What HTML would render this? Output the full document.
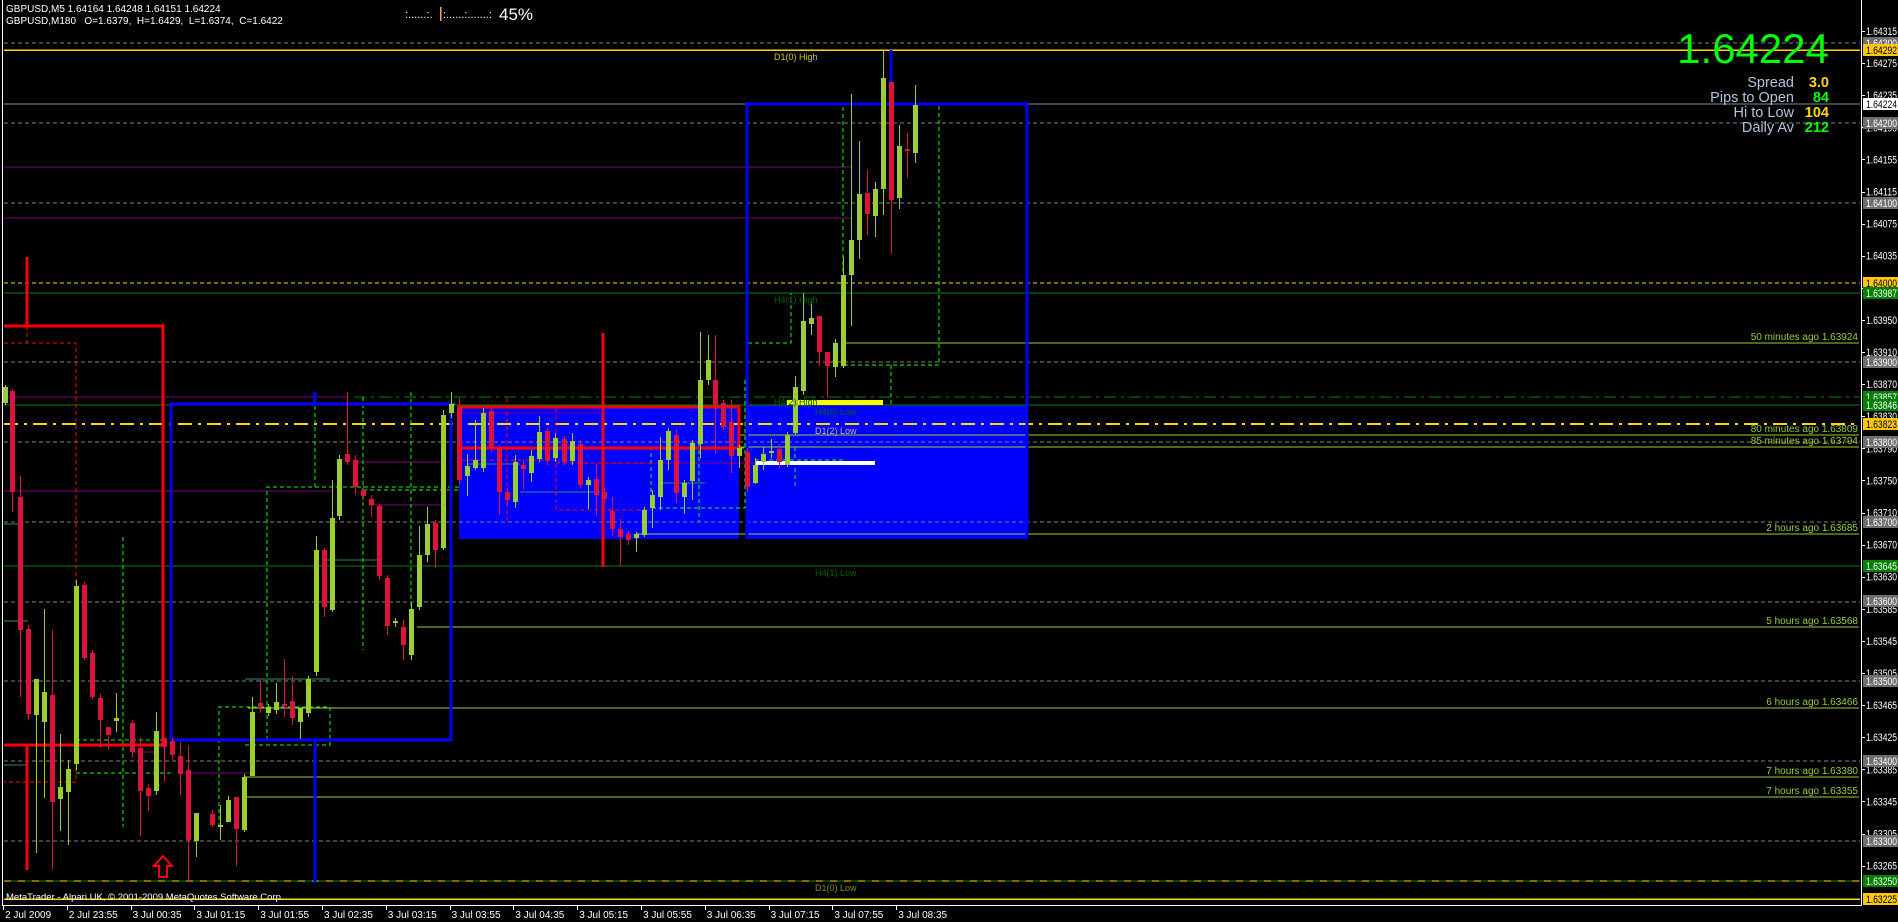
<!DOCTYPE html>
<html><head><meta charset="utf-8"><style>
html,body{margin:0;padding:0;background:#000;width:1898px;height:922px;overflow:hidden}
svg{display:block}
text{font-family:"Liberation Sans",sans-serif}
</style></head><body>
<svg id="s" width="1898" height="922" viewBox="0 0 1898 922" xmlns="http://www.w3.org/2000/svg">
<rect width="1898" height="922" fill="#000"/>
<g id="lines" shape-rendering="crispEdges">
<rect x="459" y="405" width="280" height="134" fill="#0000ff"/>
<rect x="747" y="405" width="279" height="134" fill="#0000ff"/>
<g stroke="#808080" stroke-width="1" stroke-dasharray="4,3">
<line x1="4" y1="43" x2="1860" y2="43"/><line x1="4" y1="123" x2="1860" y2="123"/>
<line x1="4" y1="203" x2="1860" y2="203"/><line x1="4" y1="362" x2="1860" y2="362"/>
<line x1="4" y1="442" x2="1860" y2="442"/><line x1="4" y1="522" x2="1860" y2="522"/>
<line x1="4" y1="602" x2="1860" y2="602"/><line x1="4" y1="681" x2="1860" y2="681"/>
<line x1="4" y1="761" x2="1860" y2="761"/><line x1="4" y1="841" x2="1860" y2="841"/>
</g>
<line x1="4" y1="50" x2="1860" y2="50" stroke="#ffd700" stroke-width="1.5"/>
<line x1="4" y1="104" x2="1860" y2="104" stroke="#778899"/>
<line x1="4" y1="167" x2="851" y2="167" stroke="#800080"/>
<line x1="4" y1="218" x2="851" y2="218" stroke="#800080"/>
<line x1="4" y1="283" x2="1860" y2="283" stroke="#ffd700" stroke-dasharray="4,3"/>
<line x1="4" y1="293" x2="1860" y2="293" stroke="#008000"/>
<line x1="843" y1="343" x2="1859" y2="343" stroke="#9acd32"/>
<line x1="4" y1="397" x2="1860" y2="397" stroke="#008000" stroke-dasharray="12,5,3,5"/>
<line x1="4" y1="405" x2="1860" y2="405" stroke="#008000"/>
<line x1="4" y1="424" x2="1860" y2="424" stroke="#ffd700" stroke-width="2" stroke-dasharray="14,6,3,6"/>
<line x1="740" y1="435" x2="1859" y2="435" stroke="#9acd32"/>
<line x1="740" y1="447" x2="1859" y2="447" stroke="#9acd32"/>
<line x1="637" y1="534" x2="1859" y2="534" stroke="#9acd32"/>
<line x1="4" y1="566" x2="1860" y2="566" stroke="#008000"/>
<line x1="417" y1="627" x2="1859" y2="627" stroke="#9acd32"/>
<line x1="248" y1="708" x2="1859" y2="708" stroke="#9acd32"/>
<line x1="245" y1="777" x2="1859" y2="777" stroke="#9acd32"/>
<line x1="245" y1="797" x2="1859" y2="797" stroke="#9acd32"/>
<line x1="4" y1="881" x2="1860" y2="881" stroke="#008000"/>
<line x1="4" y1="881" x2="1860" y2="881" stroke="#ffd700" stroke-dasharray="7,7"/>
<line x1="4" y1="899" x2="1860" y2="899" stroke="#ffd700" stroke-width="1.5"/>
<g stroke="#800080"><line x1="4" y1="397" x2="347" y2="397"/><line x1="4" y1="491" x2="331" y2="491"/><line x1="355" y1="462" x2="443" y2="462"/><line x1="371" y1="505" x2="443" y2="505"/><line x1="459" y1="413" x2="600" y2="413"/><line x1="600" y1="463" x2="763" y2="463"/><line x1="132" y1="752" x2="155" y2="752"/><line x1="180" y1="773" x2="250" y2="773"/></g>
<g stroke="#2e8b57"><line x1="4" y1="524" x2="20" y2="524"/><line x1="4" y1="621" x2="28" y2="621"/><line x1="4" y1="765" x2="28" y2="765"/><line x1="323" y1="560" x2="379" y2="560"/><line x1="467" y1="464" x2="520" y2="464"/><line x1="520" y1="492" x2="600" y2="492"/><line x1="660" y1="483" x2="705" y2="483"/><line x1="245" y1="679" x2="330" y2="679"/></g>
<g stroke="#00ff00" stroke-dasharray="4,3" fill="none">
<line x1="123" y1="537" x2="123" y2="827"/>
<polyline points="76,740 163,740"/><polyline points="76,773 171,773"/>
<polyline points="267,740 267,487 460,487"/>
<line x1="315" y1="392" x2="315" y2="487"/>
<line x1="363" y1="397" x2="363" y2="650"/>
<line x1="411" y1="392" x2="411" y2="650"/>
<line x1="340" y1="404" x2="455" y2="404"/>
<line x1="363" y1="490" x2="460" y2="490"/>
<polyline points="219,827 219,707 330,707 330,745 245,745"/>
<polyline points="843,104 939,104 939,365 843,365 843,104"/>
<polyline points="748,343 791,343 791,293"/>
<line x1="891" y1="50" x2="891" y2="104"/>
<line x1="891" y1="365" x2="891" y2="405"/>
<line x1="699" y1="380" x2="699" y2="522"/>
<polyline points="745,380 745,508 651,508 651,448 745,448"/>
<line x1="795" y1="447" x2="795" y2="488"/>
<line x1="755" y1="460" x2="843" y2="460"/>
</g>
<g stroke="#ff0000" stroke-dasharray="4,3" fill="none">
<polyline points="4,343 76,343 76,782 4,782"/>
<line x1="27" y1="326" x2="27" y2="343"/>
<polyline points="556,408 556,510 651,510"/>
<line x1="556" y1="463" x2="651" y2="463"/>
<line x1="462" y1="460" x2="555" y2="460"/>
<line x1="507" y1="398" x2="507" y2="522"/>
<line x1="604" y1="432" x2="604" y2="460"/>
</g>
<g stroke="#ff0000" stroke-width="3" fill="none">
<polyline points="4,326 163,326 163,745 4,745"/>
<line x1="27" y1="257" x2="27" y2="326"/>
<line x1="27" y1="745" x2="27" y2="870"/>
<rect x="459" y="407" width="280" height="41"/>
<line x1="459" y1="448" x2="459" y2="480"/>
<line x1="603" y1="333" x2="603" y2="567"/>
</g>
<g stroke="#0000ff" stroke-width="3" fill="none">
<polyline points="171,740 171,404 451,404 451,740 171,740"/>
<line x1="315" y1="740" x2="315" y2="883"/>
<line x1="315" y1="392" x2="315" y2="404"/>
<polyline points="747,539 747,104 1027,104 1027,539"/>
<line x1="891" y1="50" x2="891" y2="104"/>
</g>
<rect x="787" y="400" width="96" height="5" fill="#ffff00"/>
<rect x="756" y="461" width="119" height="4" fill="#ffffff"/>
</g>
<g id="candles" shape-rendering="crispEdges"></g>
<path d="M163,856 L172,866 L167,866 L167,877 L159,877 L159,866 L154,866 Z" fill="none" stroke="#ff0000" stroke-width="2"/>
<g font-size="9">
<text x="774" y="60" fill="#c8c820">D1(0) High</text>
<text x="774" y="303" fill="#006400">H4(1) High</text>
<text x="774" y="405" fill="#006400">H4(2) High</text>
<text x="815" y="415" fill="#006400">H4(0) Low</text>
<text x="815" y="434" fill="#d2b48c">D1(2) Low</text>
<text x="815" y="576" fill="#006400">H4(1) Low</text>
<text x="815" y="891" fill="#7c9a1a">D1(0) Low</text>
</g>
<g font-size="10" fill="#9acd32" text-anchor="end">
<text x="1858" y="340">50 minutes ago 1.63924</text>
<text x="1858" y="432">80 minutes ago 1.63809</text>
<text x="1858" y="444">85 minutes ago 1.63794</text>
<text x="1858" y="531">2 hours ago 1.63685</text>
<text x="1858" y="624">5 hours ago 1.63568</text>
<text x="1858" y="705">6 hours ago 1.63466</text>
<text x="1858" y="774">7 hours ago 1.63380</text>
<text x="1858" y="794">7 hours ago 1.63355</text>
</g>
<g fill="#fff" font-size="10">
<text x="6" y="12">GBPUSD,M5  1.64164 1.64248 1.64151 1.64224</text>
<text x="6" y="24" xml:space="preserve">GBPUSD,M180   O=1.6379,  H=1.6429,  L=1.6374,  C=1.6422</text>
<text x="405" y="18" font-size="11">:......:.</text>
<rect x="440" y="7" width="1.5" height="14" fill="#f4a460"/>
<text x="443" y="18" font-size="11">:......:.......:</text>
<text x="499" y="20" font-size="17">45%</text>
<text x="6" y="900" font-size="9.5">MetaTrader - Alpari UK, © 2001-2009 MetaQuotes Software Corp.</text>
</g>
<text x="1829" y="63" font-size="42" fill="#00ff00" text-anchor="end">1.64224</text>
<g font-size="14.5" fill="#b0c4de" text-anchor="end">
<text x="1794" y="87">Spread</text><text x="1794" y="102">Pips to Open</text>
<text x="1794" y="117">Hi to Low</text><text x="1794" y="132">Daily Av</text>
</g>
<g font-size="14.5" font-weight="bold" text-anchor="end">
<text x="1829" y="87" fill="#ffd700">3.0</text><text x="1829" y="102" fill="#00ff00">84</text>
<text x="1829" y="117" fill="#ffd700">104</text><text x="1829" y="132" fill="#00ff00">212</text>
</g>
<g shape-rendering="crispEdges">
<line x1="2.5" y1="0" x2="2.5" y2="905" stroke="#fff"/>
<line x1="1861.5" y1="0" x2="1861.5" y2="905" stroke="#fff"/>
<line x1="2" y1="905.5" x2="1862" y2="905.5" stroke="#fff"/>
</g>
<g id="axis" font-size="11" fill="#fff"></g>
<g id="tags" font-size="11"></g>
<g id="time" font-size="10" fill="#fff"></g>
</svg>
<script>
var NS="http://www.w3.org/2000/svg";
function el(p,t,a,txt){var e=document.createElementNS(NS,t);for(var k in a)e.setAttribute(k,a[k]);if(txt!=null)e.textContent=txt;p.appendChild(e);return e;}
var C=[[5,387,403,385,405,'g'],[12,391,492,389,512,'r'],[20,497,630,476,697,'r'],[28,629,714,625,720,'r'],[36,679,715,679,853,'g'],[44,692,722,609,798,'g'],[52,695,802,630,870,'r'],[60,787,799,734,831,'g'],[68,769,792,760,845,'g'],[76,586,764,580,770,'g'],[84,585,658,582,660,'r'],[92,653,697,650,700,'r'],[100,698,720,694,748,'r'],[108,727,735,727,749,'r'],[116,718,721,693,732,'g'],[132,723,752,720,758,'r'],[140,748,791,738,836,'r'],[148,788,796,784,811,'r'],[156,731,791,712,795,'g'],[164,738,747,738,782,'r'],[172,741,755,738,760,'r'],[180,756,774,742,795,'r'],[188,770,840,745,882,'r'],[196,813,841,813,857,'g'],[212,814,825,810,827,'r'],[220,825,827,805,840,'g'],[228,800,822,796,822,'g'],[236,797,829,797,866,'r'],[244,777,830,774,832,'g'],[252,712,776,697,776,'g'],[260,703,707,680,713,'r'],[268,707,713,704,716,'g'],[276,702,710,683,714,'g'],[284,704,706,659,717,'r'],[292,701,718,676,725,'r'],[300,708,722,708,739,'g'],[308,679,713,676,717,'g'],[316,550,672,536,676,'g'],[324,550,607,548,617,'r'],[332,518,610,480,612,'g'],[339,459,516,455,520,'g'],[347,454,462,392,465,'r'],[355,460,487,455,495,'r'],[363,490,496,485,500,'r'],[371,499,505,495,517,'r'],[379,506,576,504,580,'r'],[387,578,626,575,635,'r'],[395,621,623,618,627,'g'],[403,627,645,620,660,'r'],[411,609,655,603,660,'g'],[419,555,607,526,610,'g'],[427,524,555,507,562,'g'],[435,523,550,520,568,'r'],[443,415,548,410,550,'g'],[451,404,413,392,418,'g'],[459,407,480,398,485,'r'],[467,466,476,454,496,'g'],[475,460,468,420,470,'g'],[483,413,468,408,472,'g'],[491,411,448,408,452,'r'],[499,448,492,445,515,'r'],[507,492,500,488,505,'r'],[515,462,502,455,508,'g'],[523,465,469,460,490,'r'],[531,456,473,450,482,'g'],[539,432,459,416,462,'g'],[547,431,461,428,465,'r'],[555,438,458,433,462,'g'],[564,439,462,436,465,'r'],[572,441,461,433,465,'g'],[580,444,485,440,488,'r'],[588,480,485,477,509,'g'],[596,479,495,463,516,'r'],[604,492,499,488,503,'r'],[612,511,529,497,536,'r'],[620,529,537,519,566,'r'],[628,534,540,531,545,'r'],[636,534,538,532,552,'g'],[644,510,535,507,537,'g'],[652,495,508,490,528,'g'],[660,460,497,437,510,'g'],[668,431,460,428,470,'g'],[676,435,493,429,503,'r'],[684,483,497,480,514,'g'],[692,443,481,440,500,'g'],[700,380,444,332,458,'g'],[708,360,380,335,385,'g'],[715,380,405,335,454,'r'],[723,403,427,400,430,'r'],[731,422,456,400,473,'r'],[739,448,456,445,468,'g'],[747,452,487,448,492,'r'],[755,465,483,458,484,'g'],[763,454,462,447,470,'g'],[771,451,453,439,458,'g'],[779,449,462,444,468,'r'],[787,435,465,432,467,'g'],[795,387,433,376,435,'g'],[803,321,391,293,395,'g'],[811,318,324,300,335,'g'],[819,316,352,316,366,'r'],[827,352,366,352,398,'r'],[835,343,367,339,377,'g'],[843,275,366,257,368,'g'],[851,240,275,94,326,'g'],[859,194,240,141,259,'g'],[867,193,214,169,235,'r'],[875,189,216,182,237,'g'],[883,78,189,50,215,'g'],[891,82,200,82,254,'r'],[899,146,198,125,209,'g'],[907,149,151,133,178,'r'],[915,105,153,85,163,'g']];
var g=document.getElementById('candles');
C.forEach(function(c){var col=c[5]=='g'?'#9acd32':'#dc143c';
el(g,'rect',{x:c[0],y:c[3],width:1,height:c[4]-c[3],fill:col});
el(g,'rect',{x:c[0]-2,y:c[1],width:5,height:Math.max(2,c[2]-c[1]),fill:col});});
var ax=document.getElementById('axis');
var P=["1.64315","1.64275","1.64235","1.64195","1.64155","1.64115","1.64075","1.64035","1.63990","1.63950","1.63910","1.63870","1.63830","1.63790","1.63750","1.63710","1.63670","1.63630","1.63585","1.63545","1.63505","1.63465","1.63425","1.63385","1.63345","1.63305","1.63265"];
P.forEach(function(p,i){var y=31+i*32.1;el(ax,'rect',{x:1862,y:Math.round(y),width:3,height:1,fill:'#fff'});el(ax,'text',{x:1866,y:y+4,textLength:31,lengthAdjust:'spacingAndGlyphs'},p);});
var T=[[43,'#6e6e6e','1.64300','#fff'],[50,'#ffc800','1.64292','#000'],[104,'#ffffff','1.64224','#000'],[123,'#6e6e6e','1.64200','#fff'],[203,'#6e6e6e','1.64100','#fff'],[283,'#ffc800','1.64000','#000'],[293,'#008000','1.63987','#fff'],[362,'#6e6e6e','1.63900','#fff'],[397,'#008000','1.63857','#fff'],[405,'#008000','1.63846','#fff'],[424,'#ffc800','1.63823','#000'],[442,'#6e6e6e','1.63800','#fff'],[522,'#6e6e6e','1.63700','#fff'],[566,'#008000','1.63645','#fff'],[601,'#6e6e6e','1.63600','#fff'],[681,'#6e6e6e','1.63500','#fff'],[761,'#6e6e6e','1.63400','#fff'],[841,'#6e6e6e','1.63300','#fff'],[881,'#008000','1.63250','#fff'],[899,'#ffc800','1.63225','#000']];
var tg=document.getElementById('tags');
T.forEach(function(t){el(tg,'rect',{x:1863,y:t[0]-6,width:35,height:12,fill:t[1]});el(tg,'text',{x:1866,y:t[0]+4,fill:t[3],textLength:31,lengthAdjust:'spacingAndGlyphs'},t[2]);});
var tm=document.getElementById('time');
var L=["2 Jul 2009","2 Jul 23:55","3 Jul 00:35","3 Jul 01:15","3 Jul 01:55","3 Jul 02:35","3 Jul 03:15","3 Jul 03:55","3 Jul 04:35","3 Jul 05:15","3 Jul 05:55","3 Jul 06:35","3 Jul 07:15","3 Jul 07:55","3 Jul 08:35"];
L.forEach(function(l,i){var x=3+i*63.8;el(tm,'rect',{x:Math.round(x),y:906,width:1,height:4,fill:'#fff'});el(tm,'text',{x:x+2,y:918},l);});
</script>
</body></html>
